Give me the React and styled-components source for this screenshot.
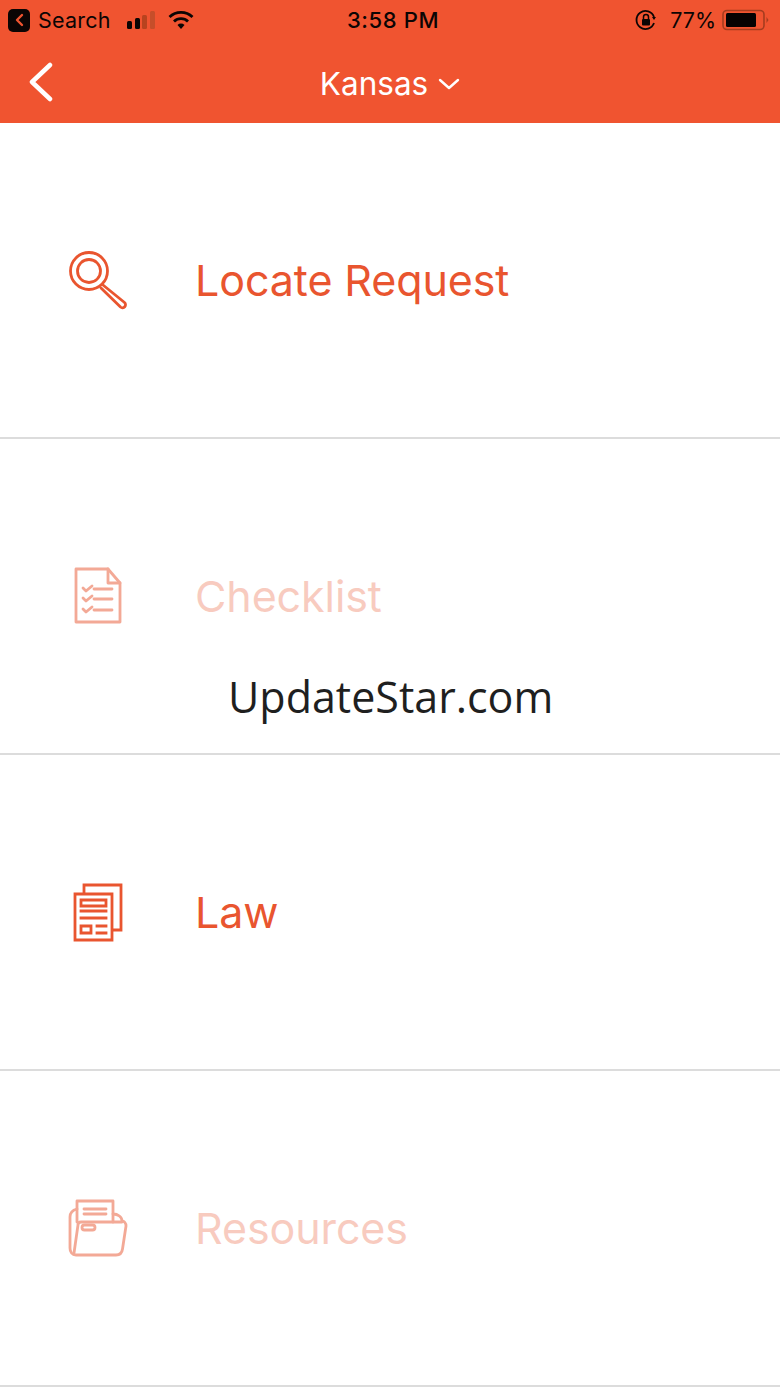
import React from "react";
import styled, { createGlobalStyle } from "styled-components";

const Global = createGlobalStyle`
  html, body { margin: 0; padding: 0; background: #fff; }
  body { font-family: Inter, "Liberation Sans", sans-serif; }
`;

const Page = styled.div`
  position: relative;
  width: 780px;
  height: 1387px;
  overflow: hidden;
  background: #fff;
`;

const Header = styled.header`
  height: 123px;
  background: #f05430;
  display: flex;
  flex-direction: column;
`;

const StatusBar = styled.div`
  height: 40px;
  display: grid;
  grid-template-columns: 1fr auto 1fr;
  align-items: center;
  padding: 0 10px 0 8px;
  color: #0b0504;
`;

const StatusLeft = styled.div`
  display: flex;
  align-items: center;
`;

const StatusRight = styled.div`
  display: flex;
  align-items: center;
  justify-content: flex-end;
`;

const BackBadge = styled.span`
  width: 22px;
  height: 23px;
  border-radius: 5px;
  background: #0b0504;
  display: flex;
  align-items: center;
  justify-content: center;
  margin-right: 8px;
`;

const SearchLabel = styled.span`
  font-size: 21.5px;
  letter-spacing: 0.2px;
  margin-right: 16px;
`;

const Clock = styled.span`
  font-size: 22px;
  font-weight: 500;
  letter-spacing: 0.6px;
  margin-right: -8px;
`;

const Percent = styled.span`
  font-size: 21.5px;
  margin: 0 6px 0 13px;
`;

const NavBar = styled.div`
  position: relative;
  flex: 1;
  display: flex;
  align-items: center;
  justify-content: center;
  padding-top: 4px;
  box-sizing: border-box;
`;

const BackButton = styled.span`
  position: absolute;
  left: 29px;
  top: 22px;
  display: flex;
`;

const NavTitle = styled.div`
  display: flex;
  align-items: center;
  gap: 10px;
  color: #fff;
  font-size: 31.5px;
  font-weight: 400;
`;

const Row = styled.div`
  box-sizing: border-box;
  height: 316px;
  border-bottom: 2px solid #dcdcdc;
  display: flex;
  align-items: center;
  padding-left: 68px;
`;

const RowIcon = styled.span`
  width: 60px;
  height: 60px;
  display: flex;
  margin-right: 68px;
  opacity: ${(p) => (p.$dim ? 0.5 : 1)};
`;

const RowLabel = styled.span`
  color: #e9552f;
  font-size: 43px;
  font-weight: 400;
  margin-left: -1px;
  letter-spacing: -0.1px;
  opacity: ${(p) => (p.$dim ? 0.3 : 1)};
`;

const Watermark = styled.div`
  position: absolute;
  left: 228px;
  top: 670px;
  font-family: "Open Sans", sans-serif;
  font-size: 43px;
  line-height: 54px;
  color: #1f1f1f;
`;

const Stroke = styled.svg`
  fill: none;
  stroke: #e9552f;
  stroke-width: 2.8;
  stroke-linecap: round;
  stroke-linejoin: round;
`;

const SearchIcon = () => (
  <Stroke width="60" height="60" viewBox="0 0 60 60">
    <circle cx="21" cy="21" r="18.5" />
    <circle cx="21" cy="21" r="11.5" />
    <path d="M35 35l21.5 17.5a3 3 0 0 1-4 4.5L33 38" />
  </Stroke>
);

const ChecklistIcon = () => (
  <Stroke width="60" height="60" viewBox="0 0 60 60">
    <path d="M8 3h32l12 14v39H8z" />
    <path d="M40 3v14h12" />
    <path d="M15 22l3 3 6-5M15 32l3 3 6-5M15 43l3 3 6-5M26 23h18M26 33h18M26 44h18" />
  </Stroke>
);

const LawIcon = () => (
  <Stroke width="60" height="60" viewBox="0 0 60 60" style={{ strokeLinecap: "square", strokeLinejoin: "miter" }}>
    <path d="M16 11V3h37v45h-8" />
    <path d="M7 12h37v46H7z" />
    <path d="M13 18h25v6H13zM13 29h25M13 36h25M13 44h10v7H13zM29 44h9M29 51h9" />
  </Stroke>
);

const FolderIcon = () => (
  <Stroke width="60" height="60" viewBox="0 0 60 60">
    <path d="M9 24V3h36v21" />
    <path d="M16 11h22M16 16h22" />
    <path d="M9 11c-4 1-7 4-7 8v31c0 4 2 7 6 7h40c4 0 6-2 6.5-6L58 28c0-3-2-5-4-5 0-4-4-7-9-7" />
    <path d="M6 55l4-28c0-2 1-3 3-3h41" />
    <rect x="14" y="27" width="13" height="5" rx="2.5" />
  </Stroke>
);

const rows = [
  { label: "Locate Request", Icon: SearchIcon },
  { label: "Checklist", Icon: ChecklistIcon, dim: true },
  { label: "Law", Icon: LawIcon },
  { label: "Resources", Icon: FolderIcon, dim: true },
];

export default function App() {
  return (
    <Page>
      <Global />
      <Header>
        <StatusBar>
          <StatusLeft>
            <BackBadge>
              <svg width="10" height="14" viewBox="0 0 10 14">
                <path d="M8 2L3 7l5 5" fill="none" stroke="#f05430" strokeWidth="2.4" strokeLinecap="round" strokeLinejoin="round" />
              </svg>
            </BackBadge>
            <SearchLabel>Search</SearchLabel>
            <svg width="32" height="20" viewBox="0 0 32 20" style={{ marginRight: 9 }}>
              <rect x="0" y="11" width="5" height="8" rx="1.5" fill="#0b0504" />
              <rect x="8" y="8" width="5" height="11" rx="1.5" fill="#0b0504" />
              <rect x="15" y="5" width="5" height="14" rx="1.5" fill="#b8431f" />
              <rect x="23" y="1" width="5" height="18" rx="1.5" fill="#c64e2a" />
            </svg>
            <svg width="26" height="20" viewBox="0 0 26 20">
              <path d="M1.5 7a16.5 16.5 0 0 1 23 0" fill="none" stroke="#0b0504" strokeWidth="2.8" />
              <path d="M6 11.5a10 10 0 0 1 14 0" fill="none" stroke="#0b0504" strokeWidth="2.8" />
              <path d="M9.5 15a5 5 0 0 1 7 0L13 19z" fill="#0b0504" />
            </svg>
          </StatusLeft>
          <Clock>3:58 PM</Clock>
          <StatusRight>
            <svg width="22" height="22" viewBox="0 0 22 22">
              <path d="M19 14a9 9 0 1 1 0-6" fill="none" stroke="#0b0504" strokeWidth="1.8" />
              <path d="M17 8h4l-2 3z" fill="#0b0504" />
              <rect x="7" y="10" width="8" height="6.5" rx="1" fill="#0b0504" />
              <path d="M8.5 10V8a2.5 2.5 0 0 1 5 0v2" fill="none" stroke="#0b0504" strokeWidth="1.5" />
            </svg>
            <Percent>77%</Percent>
            <svg width="48" height="22" viewBox="0 0 48 22">
              <rect x="1" y="1.5" width="41" height="19" rx="4" fill="none" stroke="#a53c1f" strokeWidth="1.6" />
              <rect x="4" y="4" width="30" height="14" rx="1.5" fill="#050202" />
              <path d="M44.5 8l2 3-2 3z" fill="#a53c1f" />
            </svg>
          </StatusRight>
        </StatusBar>
        <NavBar>
          <BackButton>
            <svg width="26" height="40" viewBox="0 0 26 40">
              <path d="M21 3L3 20l18 17" fill="none" stroke="#fff" strokeWidth="4.5" strokeLinecap="round" strokeLinejoin="round" />
            </svg>
          </BackButton>
          <NavTitle>
            Kansas
            <svg width="22" height="14" viewBox="0 0 22 14">
              <path d="M2 3l9 8 9-8" fill="none" stroke="#fff" strokeWidth="2.4" strokeLinecap="round" strokeLinejoin="round" />
            </svg>
          </NavTitle>
        </NavBar>
      </Header>
      {rows.map(({ label, Icon, dim }) => (
        <Row key={label}>
          <RowIcon $dim={dim}>
            <Icon />
          </RowIcon>
          <RowLabel $dim={dim}>{label}</RowLabel>
        </Row>
      ))}
      <Watermark>UpdateStar.com</Watermark>
    </Page>
  );
}
